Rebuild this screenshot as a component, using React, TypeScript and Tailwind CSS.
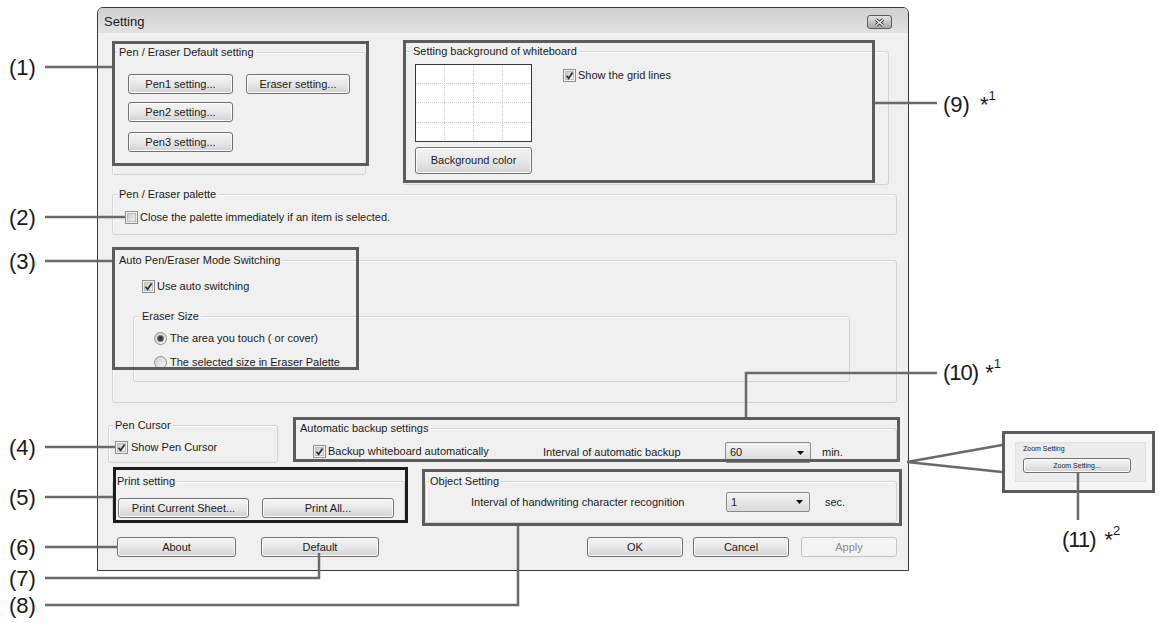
import React from "react";

type Kids = { children?: React.ReactNode; className?: string };

function Btn({ children, className = "", disabled = false }: Kids & { disabled?: boolean }) {
  const look = disabled
    ? "border-[#c4c4c4] bg-[#f4f4f4] text-[#8c8c8c]"
    : "border-[#707070] bg-linear-to-b from-[#f4f4f4] via-[#e8e8e8] to-[#d3d3d3] text-[#1b1b1b] shadow-[inset_0_0_0_1px_#fbfbfb]";
  return (
    <div className={`flex shrink-0 items-center justify-center rounded-[3px] border leading-none ${look} ${className}`}>
      {children}
    </div>
  );
}

function Check({ checked = false }: { checked?: boolean }) {
  return (
    <span className="flex h-[13px] w-[13px] shrink-0 items-center justify-center border border-[#8e8e8e] bg-[#f2f2f2]">
      <span className="relative flex h-[9px] w-[9px] items-center justify-center border border-[#bdbdbd] bg-linear-to-br from-[#c9c9c9] to-[#f3f3f3]">
        {checked && (
          <svg width="11" height="11" viewBox="0 0 11 11" className="absolute -left-[2px] -top-[2px]">
            <path d="M2.5 5.8 L4.6 8.3 L8.6 2.4" fill="none" stroke="#2e2e2e" strokeWidth="1.7" />
          </svg>
        )}
      </span>
    </span>
  );
}

function Radio({ checked = false }: { checked?: boolean }) {
  return (
    <span className="flex h-[13px] w-[13px] shrink-0 items-center justify-center rounded-full border border-[#8e8e8e] bg-linear-to-br from-[#cdcdcd] to-[#f7f7f7]">
      {checked && <span className="h-[5px] w-[5px] rounded-full bg-[#3a3a3a] shadow-[0_0_0_1px_#777]" />}
    </span>
  );
}

function Combo({ value, className = "" }: { value: string; className?: string }) {
  return (
    <div className={`flex shrink-0 items-center rounded-[2px] border border-[#8a8a8a] bg-linear-to-b from-[#f3f3f3] to-[#dadada] pl-[4px] pr-[6px] ${className}`}>
      <span className="flex-1">{value}</span>
      <svg width="7" height="4" viewBox="0 0 7 4">
        <path d="M0 0 H7 L3.5 4 Z" fill="#111" />
      </svg>
    </div>
  );
}

function Group({ label, className = "", labelClass = "left-[4px]", children }: Kids & { label: string; labelClass?: string }) {
  return (
    <div className={`relative shrink-0 rounded-[3px] border border-[#d3d3d3] shadow-[inset_1px_1px_0_#ffffff] ${className}`}>
      <span className={`absolute -top-[8px] whitespace-nowrap bg-[#f0f0f0] px-[2px] leading-[14px] ${labelClass}`}>{label}</span>
      {children}
    </div>
  );
}

function Preview() {
  return (
    <div className="h-[78px] w-[117px] border border-[#3a3a3a] bg-white">
      <svg width="115" height="76" viewBox="0 0 115 76">
        <g stroke="#c9c9c9" strokeWidth="1" strokeDasharray="1 1">
          <path d="M28.5 0 V76 M57.5 0 V76 M86.5 0 V76" />
          <path d="M0 18.5 H115 M0 37.5 H115 M0 57.5 H115" />
        </g>
      </svg>
    </div>
  );
}

function Callout({ n, star, gap = "ml-[10px]", className = "" }: { n: string; star?: string; gap?: string; className?: string }) {
  return (
    <div className={`absolute whitespace-nowrap text-[22px] leading-[26px] text-[#1a1a1a] ${className}`}>
      ({n})
      {star && (
        <span className={`${gap} tracking-normal`}>
          *<span className="relative -top-[12px] text-[13px]">{star}</span>
        </span>
      )}
    </div>
  );
}

export default function App() {
  return (
    <div className="relative h-[623px] w-[1159px] overflow-hidden bg-white font-['Liberation_Sans',Arial,sans-serif]">
      {/* dialog */}
      <div className="ml-[97px] mt-[7px] flex h-[564px] w-[812px] flex-col overflow-hidden rounded-t-[6px] border border-[#3a3a3a] bg-[#f0f0f0] text-[11px] text-[#1b1b1b]">
        <div className="flex h-[25px] shrink-0 items-start justify-between bg-linear-to-b from-[#d0d0d0] to-[#e2e2e2] pl-[6px] pr-[16px]">
          <span className="mt-[6px] text-[13px] leading-[15px]">Setting</span>
          <div className="mt-[7px] flex h-[14px] w-[25px] items-center justify-center rounded-[3px] border border-[#5a5a5a] bg-linear-to-b from-[#e2e2e2] to-[#a9a9a9]">
            <svg width="11" height="9" viewBox="0 0 11 9">
              <path d="M2 1.5 L9 7.5 M9 1.5 L2 7.5" stroke="#3c3c3c" strokeWidth="3" />
              <path d="M2 1.5 L9 7.5 M9 1.5 L2 7.5" stroke="#f4f4f4" strokeWidth="1.3" />
            </svg>
          </div>
        </div>

        <div className="flex flex-1 flex-col pl-[14px] pr-[11px] pt-[18px]">
          {/* row 1 */}
          <div className="flex items-start">
            <Group label="Pen / Eraser Default setting" className="mt-[1px] h-[123px] w-[254px]">
              <div className="flex flex-col pl-[15px] pt-[21px]">
                <div className="flex">
                  <Btn className="h-[20px] w-[105px]">Pen1 setting...</Btn>
                  <Btn className="ml-[13px] h-[20px] w-[104px]">Eraser setting...</Btn>
                </div>
                <Btn className="mt-[8px] h-[20px] w-[105px]">Pen2 setting...</Btn>
                <Btn className="mt-[10px] h-[20px] w-[105px]">Pen3 setting...</Btn>
              </div>
            </Group>
            <Group label="Setting background of whiteboard" labelClass="left-[7px]" className="ml-[37px] h-[134px] w-[486px]">
              <div className="flex pl-[11px] pt-[12px]">
                <div className="flex flex-col">
                  <Preview />
                  <Btn className="mt-[5px] h-[27px] w-[117px]">Background color</Btn>
                </div>
                <div className="ml-[31px] mt-[5px] flex h-[13px] items-center gap-[2px]">
                  <Check checked />
                  <span>Show the grid lines</span>
                </div>
              </div>
            </Group>
          </div>

          {/* row 2 */}
          <Group label="Pen / Eraser palette" className="mt-[9px] h-[41px]">
            <div className="ml-[12px] mt-[16px] flex h-[13px] items-center gap-[2px]">
              <Check />
              <span>Close the palette immediately if an item is selected.</span>
            </div>
          </Group>

          {/* row 3 */}
          <Group label="Auto Pen/Eraser Mode Switching" className="mt-[25px] h-[143px]">
            <div className="ml-[29px] mt-[19px] flex h-[13px] items-center gap-[2px]">
              <Check checked />
              <span>Use auto switching</span>
            </div>
            <Group label="Eraser Size" labelClass="left-[6px]" className="ml-[20px] mt-[23px] h-[66px] w-[717px]">
              <div className="flex flex-col gap-[11px] pl-[20px] pt-[15px]">
                <div className="flex h-[13px] items-center gap-[3px]">
                  <Radio checked />
                  <span>The area you touch ( or cover)</span>
                </div>
                <div className="flex h-[13px] items-center gap-[3px]">
                  <Radio />
                  <span>The selected size in Eraser Palette</span>
                </div>
              </div>
            </Group>
          </Group>

          {/* row 4 */}
          <div className="mt-[22px] flex items-start">
            <Group label="Pen Cursor" className="-ml-[4px] h-[38px] w-[170px]">
              <div className="ml-[6px] mt-[15px] flex h-[13px] items-center gap-[3px]">
                <Check checked />
                <span>Show Pen Cursor</span>
              </div>
            </Group>
            <Group label="Automatic backup settings" className="ml-[15px] mt-[3px] h-[33px] w-[604px]">
              <div className="ml-[19px] mt-[13px] flex h-[21px] items-center">
                <div className="mb-[3px] flex w-[230px] items-center gap-[2px]">
                  <Check checked />
                  <span>Backup whiteboard automatically</span>
                </div>
                <span className="w-[182px]">Interval of automatic backup</span>
                <Combo value="60" className="h-[21px] w-[86px]" />
                <span className="ml-[11px]">min.</span>
              </div>
            </Group>
          </div>

          {/* row 5 */}
          <div className="mt-[18px] flex items-start">
            <Group label="Print setting" labelClass="left-[2px]" className="h-[40px] w-[293px]">
              <div className="ml-[5px] mt-[16px] flex">
                <Btn className="h-[20px] w-[131px]">Print Current Sheet...</Btn>
                <Btn className="ml-[13px] h-[20px] w-[132px]">Print All...</Btn>
              </div>
            </Group>
            <Group label="Object Setting" labelClass="left-[2px]" className="ml-[20px] h-[42px] w-[472px]">
              <div className="ml-[45px] mt-[10px] flex h-[20px] items-center">
                <span className="w-[255px]">Interval of handwriting character recognition</span>
                <Combo value="1" className="h-[20px] w-[84px]" />
                <span className="ml-[15px]">sec.</span>
              </div>
            </Group>
          </div>

          {/* row 6 */}
          <div className="mt-[14px] flex">
            <Btn className="ml-[5px] h-[20px] w-[119px]">About</Btn>
            <Btn className="ml-[25px] h-[20px] w-[118px]">Default</Btn>
            <div className="ml-auto flex">
              <Btn className="h-[20px] w-[96px]">OK</Btn>
              <Btn className="ml-[10px] h-[20px] w-[96px]">Cancel</Btn>
              <Btn disabled className="ml-[12px] h-[20px] w-[96px]">Apply</Btn>
            </div>
          </div>
        </div>
      </div>

      {/* zoomed inset for (11) */}
      <div className="absolute left-[1002px] top-[431px] h-[62px] w-[153px] border-[3px] border-[#5c5c5c] bg-[#f6f6f6] text-[7px] text-[#1b1b1b]">
        <div className="ml-[10px] mt-[8px] h-[40px] w-[131px] border border-[#e0e0e0] bg-[#ececec] pl-[7px] pt-[1px]">
          <div className="leading-[9px]">Zoom Setting</div>
          <Btn className="mt-[5px] h-[15px] w-[108px]">Zoom Setting...</Btn>
        </div>
      </div>

      {/* highlight frames and leader lines */}
      <svg className="pointer-events-none absolute left-0 top-0" width="1159" height="623" viewBox="0 0 1159 623">
        <g fill="none" stroke="#5c5c5c" strokeWidth="3">
          <rect x="113.5" y="42.5" width="254" height="122" />
          <rect x="404.5" y="41.5" width="469" height="140" />
          <rect x="113.5" y="248.5" width="244" height="120" />
          <rect x="294.5" y="418.5" width="604" height="42" />
          <rect x="423.5" y="470.5" width="477" height="54" />
        </g>
        <rect x="114.5" y="468.5" width="292" height="53" fill="none" stroke="#1c1c1c" strokeWidth="3" />
        <g fill="none" stroke="#6a6a6a" strokeWidth="2.5">
          <path d="M45 67 H112" />
          <path d="M45 217 H125" />
          <path d="M45 261 H112" />
          <path d="M45 447 H115" />
          <path d="M45 497 H113" />
          <path d="M45 547 H117" />
          <path d="M45 578 H319 V553" />
          <path d="M45 605 H518 V526" />
          <path d="M875 103 H937" />
          <path d="M746 417 V373 H937" />
          <path d="M907 462 L1002 445 M907 462 L1002 472" />
          <path d="M1078 473 V520" />
        </g>
      </svg>

      <Callout n="1" className="left-[9px] top-[55px]" />
      <Callout n="2" className="left-[9px] top-[205px]" />
      <Callout n="3" className="left-[9px] top-[249px]" />
      <Callout n="4" className="left-[9px] top-[435px]" />
      <Callout n="5" className="left-[9px] top-[485px]" />
      <Callout n="6" className="left-[9px] top-[535px]" />
      <Callout n="7" className="left-[9px] top-[566px]" />
      <Callout n="8" className="left-[9px] top-[593px]" />
      <Callout n="9" star="1" className="left-[943px] top-[92px]" />
      <Callout n="10" star="1" gap="ml-[7px]" className="left-[943px] top-[360px] tracking-[-1px]" />
      <Callout n="11" star="2" gap="ml-[9px]" className="left-[1062px] top-[527px] tracking-[-1px]" />
    </div>
  );
}
